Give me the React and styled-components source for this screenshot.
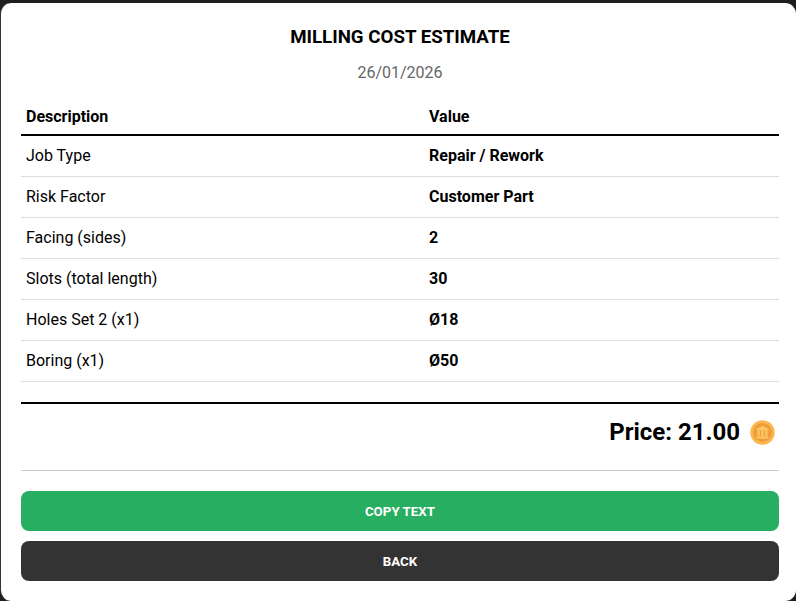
import React from "react";
import styled, { createGlobalStyle } from "styled-components";

const Global = createGlobalStyle`
  html, body { margin: 0; padding: 0; background: #1e1e1e; height: 100%; overflow: hidden; }
  #root { height: 100%; }
`;

const Modal = styled.div`
  box-sizing: border-box;
  width: 796px;
  height: 598px;
  margin-top: 3px;
  padding: 0 17px 20px 20px;
  background: #fff;
  border-left: 1px solid #333;
  border-radius: 11px;
  font-family: Roboto, sans-serif;
  color: #000;
  display: flex;
  flex-direction: column;
`;

const Title = styled.h2`
  margin: 23px 0 0;
  font-size: 18.72px;
  line-height: 22px;
  font-weight: 700;
  text-align: center;
`;

const DateLine = styled.div`
  margin-top: 15px;
  font-size: 16px;
  line-height: 20px;
  color: #666;
  text-align: center;
`;

const Table = styled.table`
  margin-top: 16px;
  width: 100%;
  border-collapse: collapse;
  table-layout: fixed;
  font-size: 16px;
`;

const Th = styled.th`
  height: 35px;
  padding: 0 5px;
  font-weight: 700;
  text-align: left;
  border-bottom: 2px solid #000;
  width: ${(p) => p.$w || "auto"};
`;

const Td = styled.td`
  height: 38px;
  padding: 0 5px 2px;
  font-weight: ${(p) => (p.$bold ? 700 : 400)};
  border-bottom: 1px solid #ddd;
`;

const PriceRow = styled.div`
  margin-top: 20px;
  box-sizing: border-box;
  height: 69px;
  border-top: 2px solid #000;
  border-bottom: 1px solid #ccc;
  padding: 0 4px 10px 0;
  display: flex;
  justify-content: flex-end;
  align-items: center;
  gap: 10px;
  font-size: 24px;
  font-weight: 700;
`;

const Button = styled.button`
  display: block;
  width: 100%;
  height: 40px;
  border: 0;
  border-radius: 8px;
  background: ${(p) => p.$bg};
  color: #fff;
  font-family: Roboto, sans-serif;
  font-size: 13.33px;
  font-weight: 700;
  text-transform: uppercase;
  margin-top: ${(p) => p.$mt}px;
`;

const Coin = () => (
  <svg width="25" height="25" viewBox="0 0 25 25" aria-hidden="true">
    <circle cx="12.5" cy="12.5" r="12.2" fill="#fcb650" />
    <circle cx="12.5" cy="12.5" r="9.5" fill="#ef9f3a" />
    <path
      d="M12.5 6 L18.5 9 V10.5 H6.5 V9 Z M6.5 16.5 H18.5 V18.5 H6.5 Z M7.5 11 H9.8 V16 H7.5 Z M11.35 11 H13.65 V16 H11.35 Z M15.2 11 H17.5 V16 H15.2 Z"
      fill="#fdc76a"
    />
  </svg>
);

const rows = [
  ["Job Type", "Repair / Rework"],
  ["Risk Factor", "Customer Part"],
  ["Facing (sides)", "2"],
  ["Slots (total length)", "30"],
  ["Holes Set 2 (x1)", "Ø18"],
  ["Boring (x1)", "Ø50"],
];

export default function App() {
  return (
    <>
      <Global />
      <Modal>
        <Title>MILLING COST ESTIMATE</Title>
        <DateLine>26/01/2026</DateLine>
        <Table>
          <thead>
            <tr>
              <Th $w="393px">Description</Th>
              <Th>Value</Th>
            </tr>
          </thead>
          <tbody>
            {rows.map(([k, v]) => (
              <tr key={k}>
                <Td>{k}</Td>
                <Td $bold>{v}</Td>
              </tr>
            ))}
          </tbody>
        </Table>
        <PriceRow>
          <span>Price: 21.00</span>
          <Coin />
        </PriceRow>
        <Button $bg="#27ae60" $mt={20}>Copy Text</Button>
        <Button $bg="#333" $mt={10}>Back</Button>
      </Modal>
    </>
  );
}
